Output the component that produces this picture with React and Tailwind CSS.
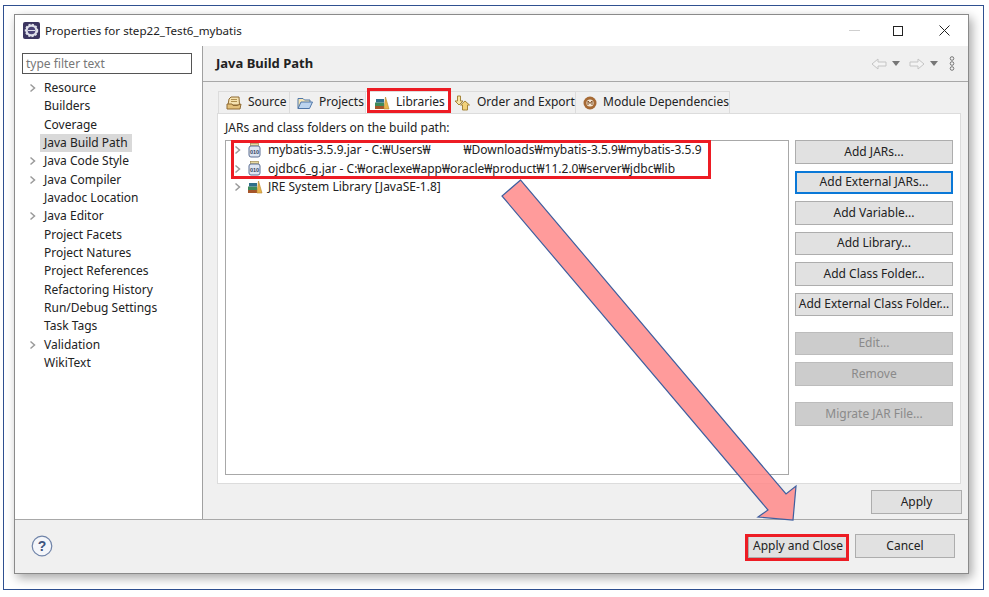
import React from 'react';

const TREE = [
  ['Resource', true], ['Builders'], ['Coverage'], ['Java Build Path', false, true], ['Java Code Style', true],
  ['Java Compiler', true], ['Javadoc Location'], ['Java Editor', true], ['Project Facets'], ['Project Natures'],
  ['Project References'], ['Refactoring History'], ['Run/Debug Settings'], ['Task Tags'], ['Validation', true], ['WikiText'],
];

function Chevron() {
  return (
    <svg width="8" height="10" viewBox="0 0 8 10" className="shrink-0">
      <path d="M1.5 1.5 L5.5 5 L1.5 8.5" fill="none" stroke="#9a9a9a" strokeWidth="1.5" />
    </svg>
  );
}

function JarIcon() {
  return (
    <svg width="13" height="15" viewBox="0 0 13 15" className="shrink-0">
      <rect x="2.5" y="0.5" width="8" height="2.5" fill="#e8d9a0" stroke="#a08a50" strokeWidth="0.7" />
      <rect x="1" y="3" width="11" height="11" rx="2" fill="#dfe6f2" stroke="#5c6f94" />
      <text x="6.5" y="10.5" textAnchor="middle" fontSize="5.5" fontWeight="700" fill="#2f3f60" fontFamily="Liberation Sans, sans-serif">010</text>
    </svg>
  );
}

function LibraryIcon() {
  return (
    <svg width="16" height="14" viewBox="0 0 16 14" className="shrink-0">
      <rect x="1" y="10" width="9" height="3" fill="#a5552a" />
      <rect x="1" y="6.5" width="9" height="3.5" fill="#3f8a5a" />
      <rect x="2" y="3" width="8" height="3.5" fill="#2f6f8a" />
      <path d="M10 13 L11.5 1 L15 13 Z" fill="#e8b44a" stroke="#b5842a" strokeWidth="0.6" />
    </svg>
  );
}

function SourceIcon() {
  return (
    <svg width="16" height="14" viewBox="0 0 16 14" className="shrink-0">
      <path d="M3 3 L5 1 H13 L13.5 9 H2 Z" fill="#f5e2b0" stroke="#8f6a32" />
      <path d="M1 8 H6 L7 9.5 H11 L15 8 L14 13 H1 Z" fill="#e3c07a" stroke="#8f6a32" />
      <path d="M5 3.5 H11 M5 5.5 H11" stroke="#b09050" />
    </svg>
  );
}

function FolderIcon() {
  return (
    <svg width="16" height="14" viewBox="0 0 16 14" className="shrink-0">
      <path d="M1 12.5 V2.5 H6 L7.5 4 H13 V6" fill="#f7e6b5" stroke="#4f76a8" />
      <path d="M1 12.5 L4 6 H15.5 L12.5 12.5 Z" fill="#bcd4ee" stroke="#4f76a8" />
    </svg>
  );
}

function OrderIcon() {
  return (
    <svg width="17" height="16" viewBox="0 0 17 16" className="shrink-0">
      <path d="M3.5 1 H6.5 V6 H9 L5 10 L1 6 H3.5 Z" fill="#f7e6a8" stroke="#a5853a" />
      <path d="M11.5 15 H8.5 V10 H6.5 L11 6 L15.5 10 H13.5 V15 Z" fill="#f3d27a" stroke="#a5853a" />
    </svg>
  );
}

function MavenIcon() {
  return (
    <svg width="14" height="14" viewBox="0 0 14 14" className="shrink-0">
      <circle cx="7" cy="7" r="6.5" fill="#a66a35" />
      <circle cx="7" cy="7" r="3.6" fill="#f3e6d4" />
      <path d="M5 9 V5 L7 7.5 L9 5 V9" fill="none" stroke="#7a4a20" strokeWidth="1" />
    </svg>
  );
}

function Button({ children, focused, disabled, className = 'w-[158px]' }) {
  const look = focused
    ? 'border-2 border-[#0a78d7]'
    : disabled
      ? 'border border-[#bcbcbc] text-[#8a8a8a]'
      : 'border border-[#adadad]';
  return (
    <div className={`h-[23.5px] flex items-center justify-center whitespace-nowrap text-[12px] shrink-0 ${disabled ? 'bg-[#cccccc]' : 'bg-[#e1e1e1]'} ${look} ${className}`}>
      {children}
    </div>
  );
}

function Tab({ icon, label, width, pad = 'pl-[7px]', active }) {
  return (
    <div
      className={`h-[22px] flex items-center gap-[6px] whitespace-nowrap border-r border-t border-[#dcdcdc] ${pad} ${active ? 'bg-white' : 'bg-[#f0f0f0]'} ${width}`}
    >
      {icon}
      <span className="text-[12px] text-[#222] -mt-[2px]">{label}</span>
    </div>
  );
}

function ListRow({ icon, children }) {
  return (
    <div className="h-[18.5px] flex items-center pl-[8px] whitespace-nowrap text-[12px] text-[#222]">
      <Chevron />
      <span className="w-[13px] ml-[6px] mr-[7px] flex justify-center">{icon}</span>
      {children}
    </div>
  );
}

export default function App() {
  return (
    <div className="relative w-[989px] h-[597px] bg-white overflow-hidden font-['Noto_Sans','Open_Sans',sans-serif] text-[#222]">
      <div className="absolute left-[3px] top-[5px] w-[981px] h-[585px] border border-[#2f5090]" />

      <div className="absolute left-[14px] top-[14px] w-[955px] h-[560px] flex flex-col border border-[#8a8a8a] bg-white shadow-[3px_4px_10px_rgba(0,0,0,0.35)]">
        {/* title bar */}
        <div className="h-[31px] flex items-center shrink-0 pl-[8px]">
          <svg width="17" height="17" viewBox="0 0 17 17">
            <rect x="0" y="0" width="17" height="17" rx="2" fill="#3b3560" />
            <circle cx="8.5" cy="8.5" r="6" fill="#dfe0ea" stroke="#dfe0ea" strokeDasharray="2 1.5" strokeWidth="1.5" />
            <circle cx="8.5" cy="8.5" r="3.8" fill="#4b4478" />
            <path d="M5 8.5 H12" stroke="#dfe0ea" strokeWidth="1" />
          </svg>
          <span className="ml-[5px] text-[11.6px] text-[#222]">Properties for step22_Test6_mybatis</span>
          <div className="ml-auto flex items-center">
            <div className="w-[11px] h-px bg-[#cfcfcf] mr-[33px]" />
            <div className="w-[10px] h-[10px] border border-[#222] mr-[36px]" />
            <svg width="11" height="11" viewBox="0 0 11 11" className="mr-[18px]">
              <path d="M0.5 0.5 L10.5 10.5 M10.5 0.5 L0.5 10.5" stroke="#222" strokeWidth="1" />
            </svg>
          </div>
        </div>

        <div className="flex flex-1 min-h-0">
          {/* tree */}
          <div className="w-[188px] shrink-0 border-r border-[#a0a0a0] pl-[7px] pt-[7px]">
            <div className="w-[170px] h-[21px] border border-[#555] flex items-center pl-[3px] text-[12px] text-[#777]">type filter text</div>
            <div className="mt-[5px]">
              {TREE.map(([name, expandable, selected]) => (
                <div key={name} className="h-[18.33px] flex items-center">
                  <span className="w-[18px] pl-[7px] flex">{expandable && <Chevron />}</span>
                  <span className={`h-[18.33px] flex items-center px-[4px] text-[12px] ${selected ? 'bg-[#d9d9d9]' : ''}`}>{name}</span>
                </div>
              ))}
            </div>
          </div>

          {/* page */}
          <div className="flex-1 bg-[#f0f0f0] flex flex-col min-w-0">
            <div className="h-[36px] shrink-0 border-b border-[#a8a8a8] flex items-center pl-[13px] pr-[13px] pt-[1px]">
              <span className="text-[13px] font-bold">Java Build Path</span>
              <div className="ml-auto flex items-center gap-[5px] -mt-px">
                <svg width="16" height="12" viewBox="0 0 16 12"><path d="M1 6 L7 1 V4 H15 V8 H7 V11 Z" fill="#f4f4f4" stroke="#c4c4c4" /></svg>
                <svg width="8" height="5" viewBox="0 0 8 5"><path d="M0 0 H8 L4 5 Z" fill="#777" /></svg>
                <svg width="16" height="12" viewBox="0 0 16 12" className="ml-[4px]"><path d="M15 6 L9 1 V4 H1 V8 H9 V11 Z" fill="#f4f4f4" stroke="#c4c4c4" /></svg>
                <svg width="8" height="5" viewBox="0 0 8 5"><path d="M0 0 H8 L4 5 Z" fill="#777" /></svg>
                <svg width="6" height="15" viewBox="0 0 6 15" className="ml-[6px]">
                  <circle cx="3" cy="2.5" r="1.8" fill="none" stroke="#777" />
                  <circle cx="3" cy="7.5" r="1.8" fill="none" stroke="#777" />
                  <circle cx="3" cy="12.5" r="1.8" fill="none" stroke="#777" />
                </svg>
              </div>
            </div>

            <div className="flex-1 pl-[14px] pr-[7px] pt-[9px]">
              <div className="flex pl-[1px]">
                <Tab icon={<SourceIcon />} label="Source" width="w-[72px] border-l" />
                <Tab icon={<FolderIcon />} label="Projects" width="w-[76px]" />
                <Tab icon={<LibraryIcon />} label="Libraries" pad="pl-[8px]" width="w-[83px]" active />
                <Tab icon={<OrderIcon />} label="Order and Export" pad="pl-[5px]" width="w-[127px]" />
                <Tab icon={<MavenIcon />} label="Module Dependencies" width="w-[154px]" />
              </div>
              <div className="h-[371px] bg-white border border-[#dcdcdc] pl-[7px] pr-[7px] pt-[5px]">
                <div className="h-[17px] flex items-center text-[12px]">JARs and class folders on the build path:</div>
                <div className="flex mt-[4px] gap-[6px]">
                  <div className="flex-1 h-[335px] border border-[#a8a8a8] overflow-hidden">
                    <ListRow icon={<JarIcon />}>mybatis-3.5.9.jar - C:₩Users₩<span className="inline-block w-[33px]" />₩Downloads₩mybatis-3.5.9₩mybatis-3.5.9</ListRow>
                    <ListRow icon={<JarIcon />}>ojdbc6_g.jar - C:₩oraclexe₩app₩oracle₩product₩11.2.0₩server₩jdbc₩lib</ListRow>
                    <ListRow icon={<LibraryIcon />}>JRE System Library [JavaSE-1.8]</ListRow>
                  </div>
                  <div className="w-[158px] flex flex-col gap-[7px]">
                    <Button>Add JARs...</Button>
                    <Button focused>Add External JARs...</Button>
                    <Button>Add Variable...</Button>
                    <Button>Add Library...</Button>
                    <Button>Add Class Folder...</Button>
                    <Button>Add External Class Folder...</Button>
                    <Button disabled className="w-[158px] mt-[8.5px]">Edit...</Button>
                    <Button disabled>Remove</Button>
                    <Button disabled className="w-[158px] mt-[9.5px]">Migrate JAR File...</Button>
                  </div>
                </div>
              </div>
              <div className="flex justify-end mt-[6px] -mr-px">
                <Button className="w-[91px]">Apply</Button>
              </div>
            </div>
          </div>
        </div>

        {/* footer */}
        <div className="h-[54px] shrink-0 bg-[#f0f0f0] border-t border-[#a8a8a8] flex items-center pl-[16px] pr-[13px]">
          <svg width="22" height="22" viewBox="0 0 22 22" className="-mt-[2px]">
            <circle cx="11" cy="11" r="9.8" fill="#f4f6fa" stroke="#6f83a8" strokeWidth="1.2" />
            <text x="11" y="16" textAnchor="middle" fontSize="14" fontWeight="700" fill="#3f5480" fontFamily="Liberation Sans, sans-serif">?</text>
          </svg>
          <div className="ml-auto flex gap-[7px] -mt-[1px]">
            <Button className="w-[100px]">Apply and Close</Button>
            <Button className="w-[100px]">Cancel</Button>
          </div>
        </div>
      </div>

      {/* annotations on top of the screenshot */}
      <div className="absolute left-[367px] top-[88px] w-[84px] h-[25px] border-[3px] border-[#ed1c24]" />
      <div className="absolute left-[231px] top-[140px] w-[480px] h-[39px] border-[3px] border-[#ed1c24]" />
      <div className="absolute left-[745px] top-[534px] w-[104px] h-[27px] border-[3px] border-[#ed1c24]" />
      <svg className="absolute left-0 top-0 pointer-events-none" width="989" height="597" viewBox="0 0 989 597">
        <polygon
          points="520.6,180 502,196 768,510 758,517 793,520 796,486 786,494"
          fill="#ff8a8a"
          fillOpacity="0.85"
          stroke="#3f5f9f"
          strokeWidth="1.2"
        />
      </svg>
    </div>
  );
}
